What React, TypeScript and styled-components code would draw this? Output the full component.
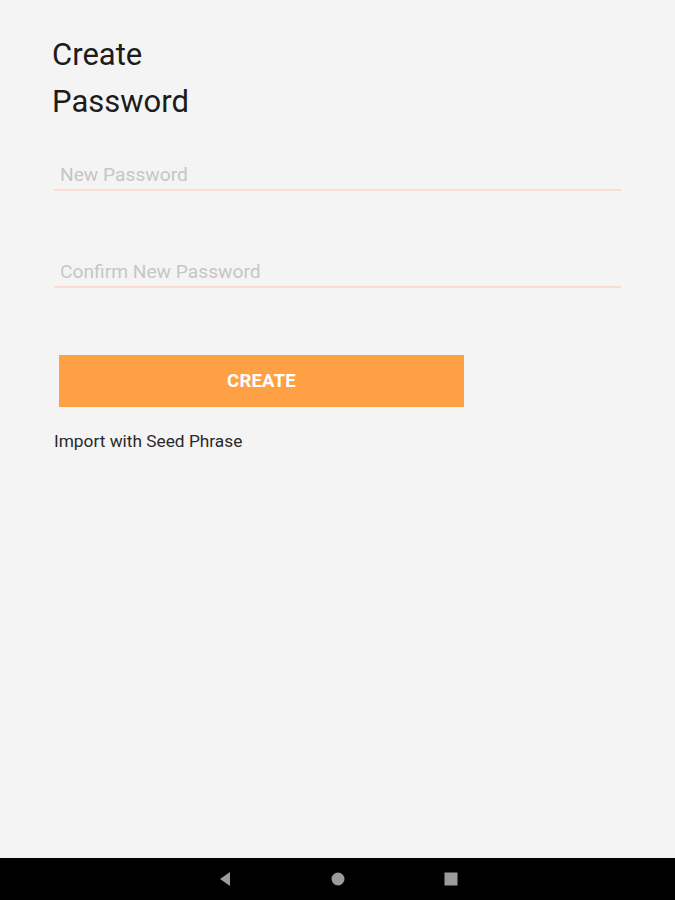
import React from 'react';
import styled, { createGlobalStyle } from 'styled-components';

const GlobalStyle = createGlobalStyle`
  html, body {
    margin: 0;
    padding: 0;
    background: #f4f4f4;
    font-family: Roboto, 'Noto Sans', sans-serif;
  }
`;

const Screen = styled.div`
  width: 675px;
  height: 900px;
  display: flex;
  flex-direction: column;
  background: #f4f4f4;
`;

const Content = styled.div`
  flex: 1;
  display: flex;
  flex-direction: column;
  padding: 31px 54px 0 52px;
`;

const Title = styled.h1`
  margin: 0;
  font-size: 31px;
  font-weight: 400;
  line-height: 47px;
  color: #1c1c1c;
`;

const Field = styled.div<{ top: number }>`
  margin-top: ${(p) => p.top}px;
  margin-left: 2px;
  border-bottom: 2px solid #fbdcd2;
  padding: 0 0 3px 6px;
`;

const Input = styled.input`
  width: 100%;
  border: none;
  outline: none;
  background: transparent;
  font-family: Roboto, sans-serif;
  font-size: 19.2px;
  line-height: 22px;
  padding: 0;
  color: #333;
  &::placeholder {
    color: #c6c6c6;
  }
`;

const CreateButton = styled.button`
  margin-top: 67px;
  margin-left: 7px;
  width: 405px;
  height: 52px;
  border: none;
  background: #ffa045;
  color: #fff;
  font-family: Roboto, sans-serif;
  font-weight: 700;
  font-size: 18.5px;
  letter-spacing: 0.2px;
`;

const LinkText = styled.div`
  margin-top: 24px;
  margin-left: 2px;
  font-size: 17.3px;
  color: #2a2a2a;
`;

const NavBar = styled.div`
  height: 42px;
  background: #000;
  display: flex;
  align-items: center;
  justify-content: center;
  gap: 95px;
`;

const NavSlot = styled.div`
  width: 18px;
  height: 18px;
  display: flex;
  align-items: center;
  justify-content: center;
`;

export default function App() {
  return (
    <Screen>
      <GlobalStyle />
      <Content>
        <Title>
          Create
          <br />
          Password
        </Title>
        <Field top={39}>
          <Input type="password" placeholder="New Password" />
        </Field>
        <Field top={70}>
          <Input type="password" placeholder="Confirm New Password" />
        </Field>
        <CreateButton>CREATE</CreateButton>
        <LinkText>Import with Seed Phrase</LinkText>
      </Content>
      <NavBar>
        <NavSlot>
          <svg width="14" height="16" viewBox="0 0 14 16">
            <path d="M12 1 L2 8 L12 15 Z" fill="#9b9b9b" />
          </svg>
        </NavSlot>
        <NavSlot>
          <svg width="14" height="14" viewBox="0 0 14 14">
            <circle cx="7" cy="7" r="6.5" fill="#9b9b9b" />
          </svg>
        </NavSlot>
        <NavSlot>
          <svg width="14" height="14" viewBox="0 0 14 14">
            <rect x="0.5" y="0.5" width="13" height="13" fill="#9b9b9b" />
          </svg>
        </NavSlot>
      </NavBar>
    </Screen>
  );
}
